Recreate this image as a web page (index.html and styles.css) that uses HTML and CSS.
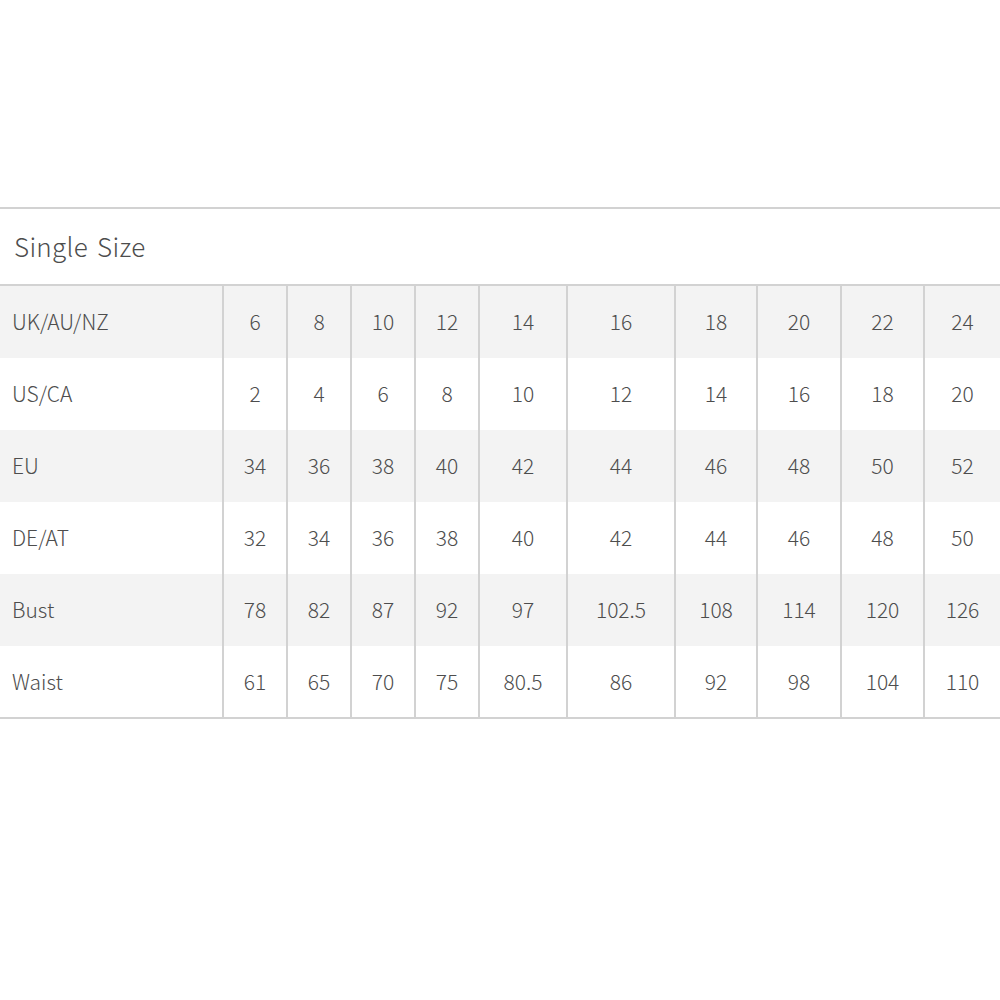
FILE: index.html
```html
<!DOCTYPE html>
<html>
<head>
<meta charset="utf-8">
<link rel="stylesheet" href="styles.css">
</head>
<body>
<section class="chart">
  <div class="chart-title">Single&nbsp;Size</div>
  <table class="size-table">
    <colgroup>
      <col class="c-label">
      <col class="c-s"><col class="c-s"><col class="c-s"><col class="c-s">
      <col class="c-m"><col class="c-l"><col class="c-n1"><col class="c-n2"><col class="c-n3"><col class="c-n4">
    </colgroup>
    <tbody>
      <tr class="shade"><th>UK/AU/NZ</th><td>6</td><td>8</td><td>10</td><td>12</td><td>14</td><td>16</td><td>18</td><td>20</td><td>22</td><td>24</td></tr>
      <tr><th>US/CA</th><td>2</td><td>4</td><td>6</td><td>8</td><td>10</td><td>12</td><td>14</td><td>16</td><td>18</td><td>20</td></tr>
      <tr class="shade"><th>EU</th><td>34</td><td>36</td><td>38</td><td>40</td><td>42</td><td>44</td><td>46</td><td>48</td><td>50</td><td>52</td></tr>
      <tr><th>DE/AT</th><td>32</td><td>34</td><td>36</td><td>38</td><td>40</td><td>42</td><td>44</td><td>46</td><td>48</td><td>50</td></tr>
      <tr class="shade"><th>Bust</th><td>78</td><td>82</td><td>87</td><td>92</td><td>97</td><td>102.5</td><td>108</td><td>114</td><td>120</td><td>126</td></tr>
      <tr><th>Waist</th><td>61</td><td>65</td><td>70</td><td>75</td><td>80.5</td><td>86</td><td>92</td><td>98</td><td>104</td><td>110</td></tr>
    </tbody>
  </table>
</section>
</body>
</html>
```
FILE: styles.css
```css
html, body {
  margin: 0;
  padding: 0;
  background: #ffffff;
}
body {
  font-family: "Noto Sans CJK SC", "Lato", sans-serif;
  font-weight: 300;
  color: #4d4d4d;
}
.chart {
  margin-top: 207px;
  width: 1000px;
}
.chart-title {
  border-top: 2px solid #d2d2d2;
  border-bottom: 2px solid #d2d2d2;
  height: 75px;
  box-sizing: border-box;
  height: 79px;
  padding-bottom: 2px;
  display: flex;
  align-items: center;
  padding-left: 14px;
  font-size: 26px;
  letter-spacing: 0.3px;
  word-spacing: 3px;
}
.size-table {
  width: 1000px;
  border-collapse: collapse;
  table-layout: fixed;
  border-bottom: 2px solid #d2d2d2;
}
.c-label { width: 223px; }
.c-s { width: 64px; }
.c-m { width: 88px; }
.c-l { width: 108px; }
.c-n1 { width: 82px; }
.c-n2 { width: 84px; }
.c-n3 { width: 83px; }
.c-n4 { width: 76px; }
.size-table tr { height: 72px; }
.size-table tr.shade { background: #f3f3f3; }
.size-table th,
.size-table td {
  padding: 0 0 2px 0;
  font-size: 21px;
  font-weight: 300;
  vertical-align: middle;
}
.size-table th {
  text-align: left;
  padding-left: 12px;
}
.size-table td {
  text-align: center;
  border-left: 2px solid #d2d2d2;
}
```
